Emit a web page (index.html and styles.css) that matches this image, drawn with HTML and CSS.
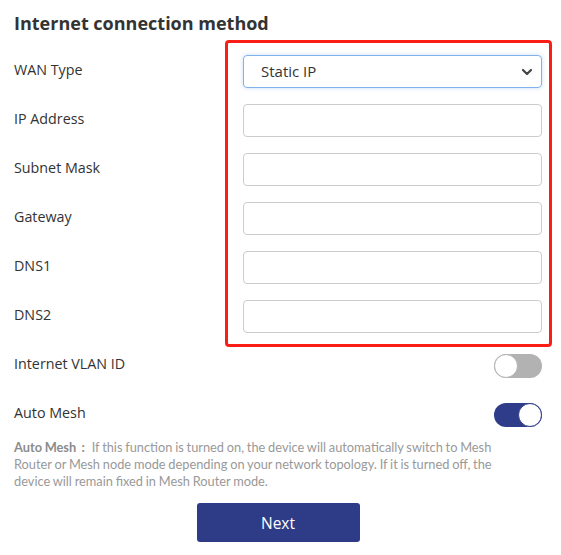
FILE: index.html
```html
<!DOCTYPE html>
<html lang="en">
<head>
<meta charset="utf-8">
<title>Internet connection method</title>
<link rel="stylesheet" href="styles.css">
</head>
<body>
<div class="page">
  <h1 class="title">Internet connection method</h1>
  <div class="form">
    <div class="row">
      <span class="label">WAN Type</span>
      <div class="select">
        <span>Static IP</span>
        <svg class="chev" width="12" height="8" viewBox="0 0 12 8"><path d="M2 2 L6 6 L10 2" fill="none" stroke="#444" stroke-width="2.2" stroke-linecap="round" stroke-linejoin="round"/></svg>
      </div>
    </div>
    <div class="row"><span class="label">IP Address</span><div class="input"></div></div>
    <div class="row"><span class="label">Subnet Mask</span><div class="input"></div></div>
    <div class="row"><span class="label">Gateway</span><div class="input"></div></div>
    <div class="row"><span class="label">DNS1</span><div class="input"></div></div>
    <div class="row"><span class="label">DNS2</span><div class="input"></div></div>
    <div class="row"><span class="label">Internet VLAN ID</span><div class="toggle off"><span class="knob"></span></div></div>
    <div class="row"><span class="label">Auto Mesh</span><div class="toggle on"><span class="knob"></span></div></div>
    <div class="highlight"></div>
  </div>
  <p class="desc"><b class="term">Auto Mesh&nbsp; :</b>If this function is turned on, the device will automatically switch to Mesh Router or Mesh node mode depending on your network topology. If it is turned off, the device will remain fixed in Mesh Router mode.</p>
  <div class="actions"><button class="next">Next</button></div>
</div>
</body>
</html>
```
FILE: styles.css
```css
* { box-sizing: border-box; }
html, body { margin: 0; padding: 0; background: #fff; }
body { font-family: "Open Sans", "Noto Sans", sans-serif; color: #333; }
.page { padding: 11px 19px 0 14px; width: 561px; }
.title { margin: 0; font-size: 18px; line-height: 24px; font-weight: 700; color: #333; }
.form { position: relative; margin-top: 12px; }
.row { height: 49px; display: flex; align-items: center; justify-content: space-between; }
.label { font-size: 14.3px; color: #333; padding-bottom: 4px; }
.select, .input { width: 299px; height: 33px; border-radius: 4px; }
.input { border: 1px solid #ccc; }
.select { border: 1px solid #7fb1ea; box-shadow: 0 0 4px rgba(102,160,230,0.35); display: flex; align-items: center; justify-content: space-between; padding: 0 8px 2px 17px; font-size: 15px; color: #333; }
.chev { display: block; margin-top: 2px; }
.toggle { width: 48px; height: 24px; border-radius: 12px; position: relative; }
.toggle .knob { position: absolute; top: 0; width: 24px; height: 24px; border-radius: 50%; background: #fff; }
.toggle.off { background: #b2b2b2; }
.toggle.off .knob { left: 0; border: 1.5px solid #b2b2b2; }
.toggle.on { background: #2e3c8a; }
.toggle.on .knob { right: 0; border: 1.5px solid #2e3c8a; }
.highlight { position: absolute; left: 211px; top: -7px; width: 327px; height: 307px; border: 3px solid #fb1e16; border-radius: 4px; pointer-events: none; }
.desc { margin: 0; font-family: Lato, "Open Sans", sans-serif; font-size: 12.8px; line-height: 17px; color: #999; width: 482px; word-spacing: -0.5px; }
.desc .term { color: #8c8c8c; font-weight: 700; margin-right: 7px; }
.actions { display: flex; justify-content: center; margin-top: 13px; }
.next { width: 163px; height: 39px; background: #2e3c88; color: #fff; border: none; border-radius: 3px; font-family: inherit; font-size: 15.5px; font-weight: 500; }
```
